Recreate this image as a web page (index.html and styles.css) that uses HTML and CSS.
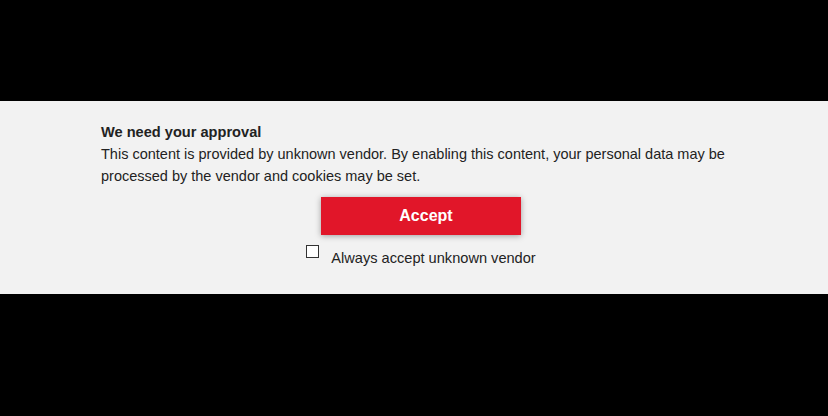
FILE: index.html
```html
<!DOCTYPE html>
<html lang="en">
<head>
<meta charset="utf-8">
<title>Consent</title>
<link rel="stylesheet" href="styles.css">
</head>
<body>
<div class="page">
  <section class="consent">
    <div class="consent-inner">
      <h2 class="consent-title">We need your approval</h2>
      <p class="consent-text">This content is provided by unknown vendor. By enabling this content, your personal data may be processed by the vendor and cookies may be set.</p>
      <div class="consent-actions">
        <button class="accept-btn" type="button">Accept</button>
        <label class="always">
          <span class="box"></span>
          <span class="always-text">Always accept unknown vendor</span>
        </label>
      </div>
    </div>
  </section>
</div>
</body>
</html>
```
FILE: styles.css
```css
html, body {
  margin: 0;
  padding: 0;
  background: #000;
}
.page {
  width: 828px;
  height: 416px;
  box-sizing: border-box;
  padding-top: 101px;
}
.consent {
  background: #f2f2f2;
  height: 193px;
  box-sizing: border-box;
  padding: 20px 87px 0 101px;
  font-family: "Liberation Sans", Arial, sans-serif;
  color: #222;
  font-size: 14.5px;
  line-height: 22px;
}
.consent-inner {
  width: 640px;
}
.consent-title {
  margin: 0;
  font-size: 14.6px;
  font-weight: bold;
  line-height: 22px;
}
.consent-text {
  margin: 0;
  width: 630px;
}
.consent-actions {
  display: flex;
  flex-direction: column;
  align-items: center;
  padding-top: 10px;
}
.accept-btn {
  width: 200px;
  height: 38px;
  border: none;
  background: #e11629;
  color: #fff;
  font-family: "Liberation Sans", Arial, sans-serif;
  font-weight: bold;
  font-size: 16px;
  box-shadow: 0 1px 6px rgba(0, 0, 0, 0.35);
  padding: 0 0 0 10px;
}
.always {
  display: flex;
  align-items: flex-start;
  margin-top: 10px;
  font-size: 14.6px;
}
.box {
  width: 11px;
  height: 11px;
  border: 1px solid #333;
  background: #fff;
  margin-right: 12px;
}
.always-text {
  margin-top: 2px;
}
```
